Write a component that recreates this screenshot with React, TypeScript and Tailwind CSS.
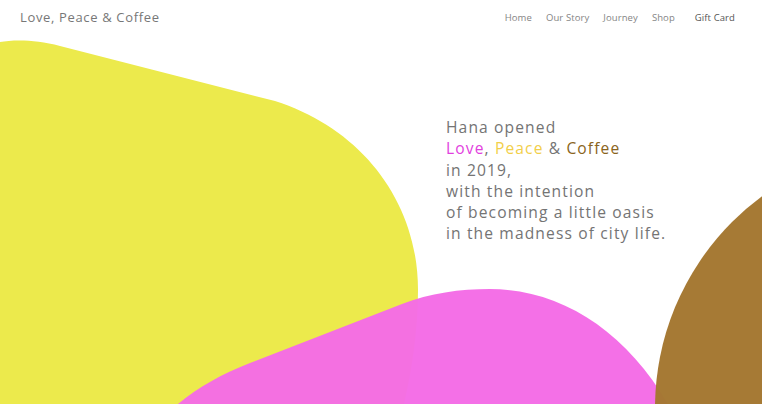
import React from "react";

export default function App() {
  return (
    <div className="relative w-[762px] h-[404px] overflow-hidden bg-white" style={{ fontFamily: '"Open Sans", "DejaVu Sans", sans-serif' }}>
      <svg className="absolute inset-0" width="762" height="404" viewBox="0 0 762 404">
        <path d="M0,42 C12,40 35,39 60,46 L275,101 C360,128 418,200 418,290 C418,330 412,370 404,404 L0,404 Z" fill="#ECEA4C" />
        <path d="M178,404 C200,386 222,374 250,363 L402,304 C430,293 460,289 490,289 C560,289 625,330 668,404 Z" fill="#F46BE6" fillOpacity="0.97" />
        <circle cx="918" cy="408" r="263" fill="#A47731" fillOpacity="0.98" />
      </svg>
      <div className="relative flex flex-col">
        <header className="flex items-center justify-between pl-5 pr-[27px] h-[36px]">
          <div className="text-[13px] tracking-[0.05em] text-[#777]">Love, Peace &amp; Coffee</div>
          <nav className="flex items-center gap-[14px] text-[9.5px] tracking-[0.01em] text-[#858585]">
            <span>Home</span>
            <span>Our Story</span>
            <span>Journey</span>
            <span>Shop</span>
            <span className="ml-[6px] text-[#555]">Gift Card</span>
          </nav>
        </header>
        <div className="ml-[446px] mt-[81px] text-[15.6px] leading-[21.3px] tracking-[0.072em] text-[#747474]">
          <div>Hana opened</div>
          <div>
            <span className="text-[#E23FDE]">Love</span>, <span className="text-[#F2CF4A]">Peace</span> &amp; <span className="text-[#8A6420]">Coffee</span>
          </div>
          <div>in 2019,</div>
          <div>with the intention</div>
          <div>of becoming a little oasis</div>
          <div>in the madness of city life.</div>
        </div>
      </div>
    </div>
  );
}
